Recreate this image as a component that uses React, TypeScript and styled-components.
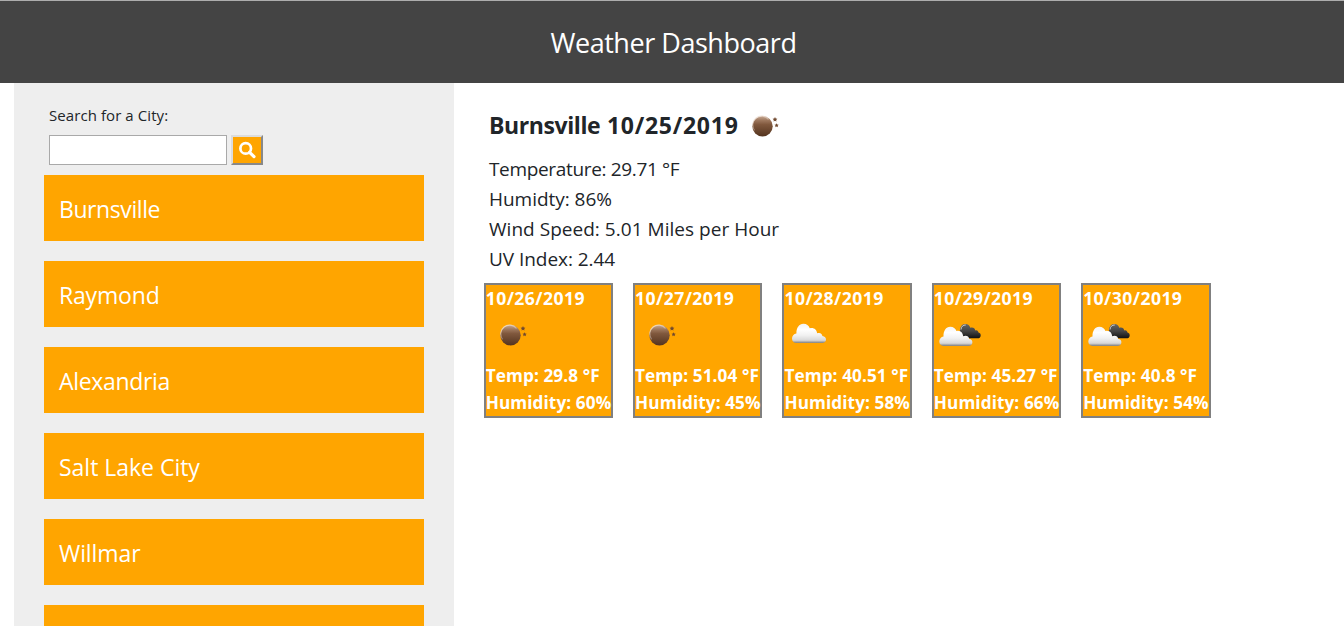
import React from "react";
import styled, { createGlobalStyle } from "styled-components";

const GlobalStyle = createGlobalStyle`
  * { box-sizing: border-box; }
  body {
    margin: 0;
    background: #fff;
    color: #212529;
    font-family: "Open Sans", "Noto Sans", sans-serif;
    overflow: hidden;
  }
`;

const Page = styled.div`
  height: 626px;
  display: flex;
  flex-direction: column;
  overflow: hidden;
`;

const Header = styled.header`
  flex: none;
  height: 83px;
  padding: 2px 0 0 3px;
  border-top: 1px solid #adadad;
  background: #444;
  color: #fff;
  display: flex;
  align-items: center;
  justify-content: center;
`;

const Title = styled.h1`
  margin: 0;
  font-size: 27px;
  font-weight: 400;
  line-height: 40px;
  letter-spacing: -0.46px;
  white-space: nowrap;
`;

const Columns = styled.div`
  flex: 1;
  min-height: 0;
  display: flex;
  padding-left: 14px;
`;

const Sidebar = styled.aside`
  flex: none;
  width: 440px;
  padding: 20px 30px 0;
  background: #eee;
  overflow: hidden;
`;

const SearchForm = styled.div`
  padding-left: 5px;
  height: 72px;
`;

const SearchLabel = styled.label`
  display: block;
  height: 32px;
  font-size: 15px;
  line-height: 24px;
  letter-spacing: 0.08px;
`;

const SearchRow = styled.div`
  display: flex;
  gap: 4px;
`;

const SearchInput = styled.input`
  width: 178px;
  height: 30px;
  padding: 1px 4px;
  border: 1px solid #a9a9a9;
  border-radius: 0;
  background: #fff;
  outline: none;
`;

const SearchButton = styled.button`
  width: 32px;
  height: 30px;
  padding: 0;
  border: 2px solid;
  border-color: #dcdcdc #888 #888 #dcdcdc;
  background: orange;
  color: #fff;
  display: flex;
  align-items: center;
  justify-content: center;
`;

const SearchGlyph = styled.svg`
  display: block;
  width: 18px;
  height: 18px;
`;

const CityList = styled.div`
  display: flex;
  flex-direction: column;
  gap: 20px;
`;

const City = styled.div<{ $spacing: number }>`
  flex: none;
  height: 66px;
  padding: 0 15px;
  background: orange;
  color: #fff;
  font-size: 23px;
  line-height: 68px;
  letter-spacing: ${(p) => p.$spacing}px;
`;

const Main = styled.main`
  padding: 20px 0 0 30px;
`;

const Current = styled.section`
  height: 180px;
  padding-left: 5px;
`;

const CurrentHeading = styled.div`
  display: flex;
  height: 51px;
`;

const CurrentTitle = styled.h2`
  margin: 0;
  width: 249px;
  font-size: 23px;
  font-weight: 700;
  line-height: 44px;
  letter-spacing: 0.74px;
  white-space: nowrap;
`;

const CurrentCity = styled.span`
  letter-spacing: -0.41px;
`;

const Detail = styled.p<{ $spacing: number }>`
  margin: 0;
  font-size: 19px;
  line-height: 30px;
  letter-spacing: ${(p) => p.$spacing}px;
  white-space: nowrap;
`;

const Forecast = styled.section`
  display: flex;
  gap: 20px;
  margin-left: -0.3px;
`;

const Card = styled.article`
  width: 129.37px;
  height: 135px;
  border: 2px solid gray;
  background: orange;
  color: #fff;
  font-size: 17.2px;
  font-weight: 700;
  line-height: 27px;
  white-space: nowrap;
`;

const CardDate = styled.div`
  height: 27px;
  font-size: 17.6px;
  letter-spacing: 0.42px;
`;

const CardLine = styled.div`
  height: 27px;
  letter-spacing: 0.08px;
`;

const IconBox = styled.svg`
  display: block;
  width: 50px;
  height: 50px;
`;

type Sky = "night" | "cloud" | "broken";

const star = (cx: number, cy: number, r: number) =>
  Array.from({ length: 10 }, (_, i) => {
    const a = -Math.PI / 2 + (i * Math.PI) / 5;
    const d = i % 2 ? r * 0.5 : r;
    return `${(cx + d * Math.cos(a)).toFixed(2)},${(cy + d * Math.sin(a)).toFixed(2)}`;
  }).join(" ");

function WeatherIcon({ sky, id }: { sky: Sky; id: string }) {
  return (
    <IconBox viewBox="0 0 50 50">
      <defs>
        <linearGradient id={`${id}-moon`} x1="0" y1="0" x2="0" y2="1">
          <stop offset="0" stopColor="#c9ab96" />
          <stop offset="0.2" stopColor="#a07a60" />
          <stop offset="0.42" stopColor="#80583d" />
          <stop offset="1" stopColor="#54341f" />
        </linearGradient>
        <linearGradient id={`${id}-shine`} x1="0" y1="0" x2="0.6" y2="1">
          <stop offset="0" stopColor="#f3e6dc" stopOpacity="0.95" />
          <stop offset="1" stopColor="#d8c3b4" stopOpacity="0.25" />
        </linearGradient>
        <linearGradient id={`${id}-white`} x1="0" y1="0" x2="0" y2="1">
          <stop offset="0" stopColor="#f4f4f4" />
          <stop offset="0.3" stopColor="#fff" />
          <stop offset="0.6" stopColor="#f1f1f1" />
          <stop offset="0.86" stopColor="#d8d8d8" />
          <stop offset="1" stopColor="#808080" />
        </linearGradient>
        <linearGradient id={`${id}-dark`} x1="0" y1="0" x2="0" y2="1">
          <stop offset="0" stopColor="#666" />
          <stop offset="0.5" stopColor="#444" />
          <stop offset="1" stopColor="#111" />
        </linearGradient>
      </defs>
      {sky === "night" && (
        <>
          <circle cx="24.5" cy="23.2" r="10.2" fill={`url(#${id}-moon)`} />
          <path
            d="M16.6 27.4A8.8 8.8 0 0 1 30.5 16.5"
            fill="none"
            stroke={`url(#${id}-shine)`}
            strokeWidth="1.2"
          />
          <polygon points={star(37, 16.5, 2.5)} fill="#70492f" />
          <polygon points={star(38.6, 22.5, 2.2)} fill="#70492f" />
        </>
      )}
      {sky === "cloud" && (
        <path
          d="M12.5 31C9.6 31 8 28.9 8 26.5C8 23.8 9.8 21.7 12.4 21.4C12.3 15.7 15.2 11.8 19.4 11.8C22.8 11.8 24.6 13.4 25.8 16.2C29.8 15.2 32.7 17.5 33.2 21.3C36.2 20.1 38.2 21.8 38.4 24.1C40.8 24.3 42 25.8 42 27.6C42 29.8 40.5 31 38.3 31Z"
          fill={`url(#${id}-white)`}
        />
      )}
      {sky === "broken" && (
        <>
          <path
            d="M26 21C25.6 15.3 27.8 12.1 31.2 12.1C34.2 12.1 35.6 13.6 36.3 15.7C39 14.7 41 16.2 41.2 18.4C43.2 17.8 44.2 19 44.5 20.5C46 20.8 46.8 22 46.7 23.4C46.6 25.4 45.3 26.3 43.5 26.3H31Z"
            fill={`url(#${id}-dark)`}
          />
          <path
            d="M27 17.6C27.3 14.5 29.1 12.9 31.8 13"
            fill="none"
            stroke="#d4d4d4"
            strokeWidth="0.9"
          />
          <path
            d="M9.4 33.9C6.8 33.9 5.3 32 5.3 29.6C5.3 27 7 24.9 9.5 24.5C9.3 18.8 12 14.7 16.2 14.7C19.5 14.7 21.4 16.3 22.5 19C26.3 18 28.7 20.3 29.2 24.2C32.2 22.8 34.9 24.3 35.1 26.7C37.3 27 38.4 28.5 38.4 30.3C38.4 32.7 36.8 33.9 34.6 33.9Z"
            fill={`url(#${id}-white)`}
          />
        </>
      )}
    </IconBox>
  );
}

const cities = [
  { name: "Burnsville", spacing: -0.42 },
  { name: "Raymond", spacing: -0.18 },
  { name: "Alexandria", spacing: -0.32 },
  { name: "Salt Lake City", spacing: -0.02 },
  { name: "Willmar", spacing: -0.1 },
  { name: "", spacing: 0 },
];

const details = [
  { text: "Temperature: 29.71 °F", spacing: -0.34 },
  { text: "Humidty: 86%", spacing: -0.03 },
  { text: "Wind Speed: 5.01 Miles per Hour", spacing: 0.03 },
  { text: "UV Index: 2.44", spacing: -0.05 },
];

const days: { date: string; sky: Sky; temp: string; humidity: string }[] = [
  { date: "10/26/2019", sky: "night", temp: "29.8", humidity: "60" },
  { date: "10/27/2019", sky: "night", temp: "51.04", humidity: "45" },
  { date: "10/28/2019", sky: "cloud", temp: "40.51", humidity: "58" },
  { date: "10/29/2019", sky: "broken", temp: "45.27", humidity: "66" },
  { date: "10/30/2019", sky: "broken", temp: "40.8", humidity: "54" },
];

export default function App() {
  return (
    <Page>
      <GlobalStyle />
      <Header>
        <Title>Weather Dashboard</Title>
      </Header>
      <Columns>
        <Sidebar>
          <SearchForm>
            <SearchLabel htmlFor="city">Search for a City:</SearchLabel>
            <SearchRow>
              <SearchInput id="city" />
              <SearchButton aria-label="Search">
                <SearchGlyph viewBox="0 0 18 18" fill="none" stroke="currentColor">
                  <circle cx="7.7" cy="7.4" r="5.3" strokeWidth="2.7" />
                  <path d="M11.6 11.3L16 15.6" strokeWidth="3.2" strokeLinecap="round" />
                </SearchGlyph>
              </SearchButton>
            </SearchRow>
          </SearchForm>
          <CityList>
            {cities.map((c) => (
              <City key={c.name} $spacing={c.spacing}>
                {c.name}
              </City>
            ))}
          </CityList>
        </Sidebar>
        <Main>
          <Current>
            <CurrentHeading>
              <CurrentTitle>
                <CurrentCity>Burnsville</CurrentCity> 10/25/2019
              </CurrentTitle>
              <WeatherIcon sky="night" id="now" />
            </CurrentHeading>
            {details.map((d) => (
              <Detail key={d.text} $spacing={d.spacing}>
                {d.text}
              </Detail>
            ))}
          </Current>
          <Forecast>
            {days.map((d, i) => (
              <Card key={d.date}>
                <CardDate>{d.date}</CardDate>
                <WeatherIcon sky={d.sky} id={`day${i}`} />
                <CardLine>Temp: {d.temp} °F</CardLine>
                <CardLine>Humidity: {d.humidity}%</CardLine>
              </Card>
            ))}
          </Forecast>
        </Main>
      </Columns>
    </Page>
  );
}
